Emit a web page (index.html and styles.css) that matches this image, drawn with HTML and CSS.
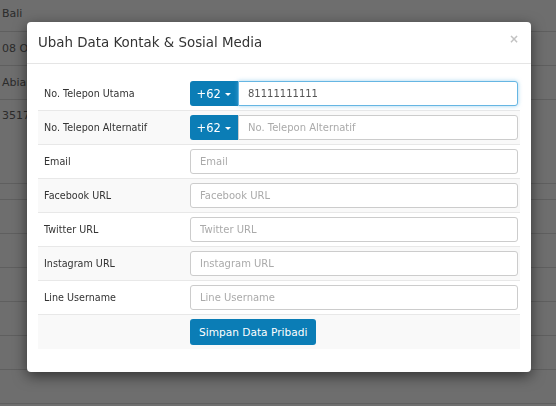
FILE: index.html
```html
<!DOCTYPE html>
<html lang="id">
<head>
  <meta charset="UTF-8">
  <title>Ubah Data Kontak</title>
  <link rel="stylesheet" href="styles.css">
</head>
<body>
  <table class="page-table">
    <tr class="r-first"><td class="cut">Bali</td><td></td></tr>
    <tr><td class="cut">08 Oktober 1995</td><td></td></tr>
    <tr><td class="cut">Abiansemal</td><td></td></tr>
    <tr class="r-tall"><td class="cut">3517123456789</td><td></td></tr>
    <tr class="r-short"><td></td><td></td></tr>
    <tr><td></td><td></td></tr>
    <tr><td></td><td></td></tr>
    <tr><td></td><td></td></tr>
    <tr><td></td><td></td></tr>
    <tr><td></td><td></td></tr>
    <tr><td></td><td></td></tr>
  </table>

  <div class="backdrop"></div>

  <div class="modal">
    <div class="modal-header">
      <h4 class="modal-title">Ubah Data Kontak &amp; Sosial Media</h4>
      <span class="close">&times;</span>
    </div>
    <div class="modal-body">
      <table class="form-table">
        <tr>
          <td class="label">No. Telepon Utama</td>
          <td>
            <div class="input-group">
              <button class="btn-code">+62 <span class="caret"></span></button>
              <input class="form-control focus" type="text" value="81111111111">
            </div>
          </td>
        </tr>
        <tr class="striped">
          <td class="label">No. Telepon Alternatif</td>
          <td>
            <div class="input-group">
              <button class="btn-code">+62 <span class="caret"></span></button>
              <input class="form-control" type="text" placeholder="No. Telepon Alternatif">
            </div>
          </td>
        </tr>
        <tr>
          <td class="label">Email</td>
          <td><input class="form-control" type="text" placeholder="Email"></td>
        </tr>
        <tr class="striped">
          <td class="label">Facebook URL</td>
          <td><input class="form-control" type="text" placeholder="Facebook URL"></td>
        </tr>
        <tr>
          <td class="label">Twitter URL</td>
          <td><input class="form-control" type="text" placeholder="Twitter URL"></td>
        </tr>
        <tr class="striped">
          <td class="label">Instagram URL</td>
          <td><input class="form-control" type="text" placeholder="Instagram URL"></td>
        </tr>
        <tr>
          <td class="label">Line Username</td>
          <td><input class="form-control" type="text" placeholder="Line Username"></td>
        </tr>
        <tr class="striped">
          <td></td>
          <td><button class="btn-save">Simpan Data Pribadi</button></td>
        </tr>
      </table>
    </div>
  </div>
</body>
</html>
```

FILE: styles.css
```css
html, body {
  height: 406px;
  overflow: hidden;
}
body {
  margin: 0;
  background: #fff;
  font-family: "DejaVu Sans", sans-serif;
  color: #333;
}
.page-table {
  width: 100%;
  table-layout: fixed;
  border-collapse: collapse;
  font-size: 11px;
}
.page-table td {
  height: 33px;
  padding: 0;
  border-bottom: 1px solid #ddd;
  color: #666;
}
.page-table td.cut {
  width: 25px;
  padding-left: 2px;
  overflow: hidden;
  white-space: nowrap;
}
.page-table .r-first td {
  height: 27px;
  padding-bottom: 4px;
}
.page-table .r-tall td {
  height: 74px;
  vertical-align: top;
  padding-top: 9px;
}
.page-table .r-short td {
  height: 15px;
}
.backdrop {
  position: fixed;
  inset: 0;
  background: rgba(0, 0, 0, 0.57);
}
.modal {
  position: absolute;
  left: 27px;
  top: 22px;
  width: 504px;
  height: 350px;
  background: #fff;
  border-radius: 4px;
  box-shadow: 0 4px 14px rgba(0, 0, 0, 0.55);
}
.modal-header {
  height: 41px;
  border-bottom: 1px solid #e5e5e5;
  padding: 0 11px;
  display: flex;
  align-items: center;
  justify-content: space-between;
}
.modal-title {
  margin: 0;
  font-size: 13.4px;
  font-weight: normal;
  color: #333;
}
.close {
  color: #c2c2c2;
  font-size: 12px;
  font-weight: bold;
  margin-top: -7px;
  margin-right: 1px;
}
.modal-body {
  padding: 13px 11px 11px;
}
.form-table {
  width: 100%;
  border-collapse: collapse;
}
.form-table td {
  padding: 4px 2px 4px 4px;
  border-top: 1px solid #e8e8e8;
  height: 25px;
}
.form-table tr:first-child td {
  border-top: 0;
}
.form-table .label {
  width: 140px;
  padding-left: 6px;
  font-size: 9.6px;
  color: #333;
}
.form-table .striped td {
  background: #f9f9f9;
}
.form-control {
  box-sizing: border-box;
  width: 100%;
  height: 25px;
  border: 1px solid #ccc;
  border-radius: 3px;
  padding: 0 9px;
  font-family: inherit;
  font-size: 10px;
  color: #555;
  background: #fff;
  outline: none;
}
.form-control::placeholder {
  color: #aaa;
}
.form-control.focus {
  border-color: #66b6e3;
  box-shadow: 0 0 4px rgba(102, 182, 227, 0.6);
}
.input-group {
  display: flex;
}
.input-group .form-control {
  border-radius: 0 3px 3px 0;
}
.btn-code {
  width: 48px;
  height: 25px;
  flex-shrink: 0;
  border: 0;
  border-radius: 3px 0 0 3px;
  background: #0b7db6;
  color: #fff;
  font-family: inherit;
  font-size: 11.5px;
  padding: 0;
}
.caret {
  display: inline-block;
  border-top: 3px solid #fff;
  border-left: 3px solid transparent;
  border-right: 3px solid transparent;
  vertical-align: middle;
  margin-left: 1px;
}
.btn-save {
  height: 26px;
  padding: 0 9px;
  border: 0;
  border-radius: 3px;
  background: #0b7db6;
  color: #fff;
  font-family: inherit;
  font-size: 10.6px;
  font-weight: 500;
}
```
